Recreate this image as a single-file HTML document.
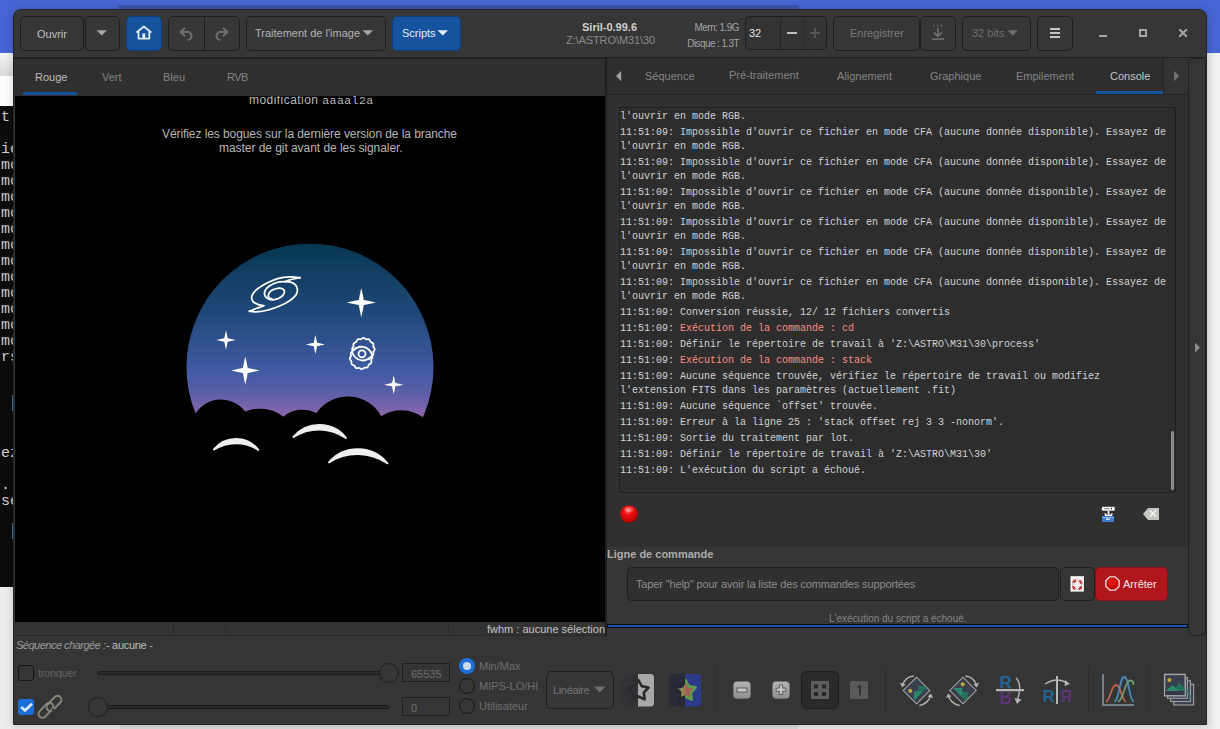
<!DOCTYPE html>
<html><head><meta charset="utf-8">
<style>
*{box-sizing:border-box;margin:0;padding:0}
html,body{width:1220px;height:729px;overflow:hidden}
body{position:relative;background:#ececec;font-family:"Liberation Sans",sans-serif;font-size:11px;color:#c8c8c8}
.a{position:absolute}
.btn{position:absolute;background:#363636;border:1px solid #1e1e1e;border-radius:5px}
.t{position:absolute;white-space:nowrap;line-height:1}
.term{position:absolute;left:1px;font-family:"Liberation Mono",monospace;font-size:15px;color:#cfcfcf;line-height:16px;white-space:pre}
.con{position:absolute;left:620px;font-family:"Liberation Mono",monospace;font-size:10px;color:#d2d2d2;white-space:pre;line-height:14px}
.red{color:#f88e86}
</style></head>
<body>
<!-- desktop background -->
<div class="a" style="left:0;top:0;width:1220px;height:53px;background:#4664d2"></div>
<div class="a" style="left:119px;top:5px;width:680px;height:5px;background:#3a54ab;border-radius:2px 2px 0 0"></div>
<div class="a" style="left:0;top:53px;width:14px;height:23px;background:linear-gradient(#f4f4f4,#d9d9d9)"></div>
<div class="a" style="left:0;top:76px;width:14px;height:30px;background:#fdfdfd"></div>
<div class="a" style="left:0;top:106px;width:14px;height:481px;background:#0c0c0c"></div>
<div class="a" style="left:1207px;top:53px;width:13px;height:676px;background:linear-gradient(90deg,#e6e6e8,#f3f4f6)"></div>
<div class="a" style="left:120px;top:724px;width:678px;height:5px;background:#dcdcdc"></div>
<!-- terminal text -->
<div class="term" style="top:110px">t
 
ie
mc
mc
mc
mc
mc
mc
mc
mc
mc
mc
mc
mc
rs</div>
<div class="a" style="left:12px;top:395px;width:1px;height:16px;background:#3a7ab8"></div>
<div class="term" style="top:446px">ez
 
.
se</div>
<div class="a" style="left:12px;top:523px;width:1px;height:16px;background:#3a7ab8"></div>

<!-- window -->
<div class="a" id="win" style="left:13px;top:9px;width:1194px;height:716px;background:#353535;border-radius:8px 8px 0 0;border:1px solid #242424;box-shadow:0 1px 8px rgba(0,0,0,0.18)"></div>

<!-- header -->
<div class="a" style="left:14px;top:10px;width:1192px;height:47px;background:#363636;border-radius:7px 7px 0 0"></div>
<div class="a" style="left:14px;top:57px;width:1192px;height:1px;background:#1f1f1f"></div>
<div class="btn" style="left:20px;top:16px;width:64px;height:35px"></div>
<div class="t" style="left:37px;top:29px;color:#c0c0c0">Ouvrir</div>
<div class="btn" style="left:85px;top:16px;width:35px;height:35px"></div>
<svg class="a" style="left:96px;top:30px" width="12" height="7"><path d="M0.5 0.3 L11 0.3 L5.75 5.6 Z" fill="#a6a6a6"/></svg>
<div class="btn" style="left:126px;top:16px;width:36px;height:35px;background:#15539e;border-color:#0f3d75"></div>
<svg class="a" style="left:134px;top:24px" width="20" height="18"><path d="M2.5 8.5 L9.9 2.5 L17.3 8.5 M4.5 7 V14.6 H15.3 V7" fill="none" stroke="#e3ebf4" stroke-width="1.8" stroke-linejoin="round"/><rect x="8.3" y="9.4" width="3" height="5" fill="#e3ebf4"/></svg>
<div class="btn" style="left:168px;top:16px;width:72px;height:35px"></div>
<div class="a" style="left:204px;top:17px;width:1px;height:33px;background:#1e1e1e"></div>
<svg class="a" style="left:176px;top:24px" width="20" height="18"><path d="M8.6 4.3 L4.5 8 L8.6 11.7 M4.8 8 H12 A4 4 0 0 1 12.6 15.8" fill="none" stroke="#6e6e6e" stroke-width="2" stroke-linecap="round" stroke-linejoin="round"/></svg>
<svg class="a" style="left:212px;top:24px" width="20" height="18"><path d="M11.4 4.3 L15.5 8 L11.4 11.7 M15.2 8 H8 A4 4 0 0 0 7.4 15.8" fill="none" stroke="#6e6e6e" stroke-width="2" stroke-linecap="round" stroke-linejoin="round"/></svg>
<div class="btn" style="left:246px;top:16px;width:140px;height:35px"></div>
<div class="t" style="left:255px;top:28px;color:#b4b4b4">Traitement de l'image</div>
<svg class="a" style="left:362px;top:30px" width="12" height="7"><path d="M0.5 0.3 L11 0.3 L5.75 5.6 Z" fill="#a6a6a6"/></svg>
<div class="btn" style="left:392px;top:16px;width:69px;height:35px;background:#15539e;border-color:#0f3d75"></div>
<div class="t" style="left:402px;top:28px;color:#e6ecf4">Scripts</div>
<svg class="a" style="left:437px;top:30px" width="12" height="7"><path d="M0.5 0.3 L11 0.3 L5.75 5.6 Z" fill="#e6ecf4"/></svg>
<div class="t" style="left:582px;top:22px;font-weight:bold;color:#cfcfcf">Siril-0.99.6</div>
<div class="t" style="left:566px;top:35px;color:#8c8c8c;letter-spacing:-0.1px">Z:\ASTRO\M31\30</div>
<div class="t" style="right:481px;top:23px;font-size:10px;color:#a4a4a4;letter-spacing:-0.55px">Mem: 1.9G</div>
<div class="t" style="right:481px;top:39px;font-size:10px;color:#a4a4a4;letter-spacing:-0.6px">Disque : 1.3T</div>
<div class="btn" style="left:745px;top:16px;width:82px;height:34px;background:#333"></div>
<div class="a" style="left:780px;top:17px;width:1px;height:32px;background:#262626"></div>
<div class="a" style="left:803px;top:17px;width:1px;height:32px;background:#2c2c2c"></div>
<div class="t" style="left:749px;top:28px;color:#e6e6e6">32</div>
<div class="a" style="left:787px;top:32px;width:10px;height:2px;background:#bdbdbd"></div>
<div class="a" style="left:810px;top:32px;width:10px;height:2px;background:#555"></div>
<div class="a" style="left:814px;top:28px;width:2px;height:10px;background:#555"></div>
<div class="btn" style="left:833px;top:16px;width:87px;height:35px"></div>
<div class="t" style="left:850px;top:28px;color:#7a7a7a">Enregistrer</div>
<div class="btn" style="left:920px;top:16px;width:36px;height:35px"></div>
<svg class="a" style="left:930px;top:23px" width="16" height="18"><g fill="#6e6e6e"><rect x="3.3" y="1.9" width="1.4" height="1.4"/><rect x="7" y="1.9" width="1.4" height="1.4"/><rect x="10.7" y="1.9" width="1.4" height="1.4"/><rect x="2" y="15.3" width="12" height="1.6"/></g><path d="M7.8 5 V13 M3.8 9.3 L7.8 13.3 L11.8 9.3" fill="none" stroke="#6e6e6e" stroke-width="1.7"/></svg>
<div class="btn" style="left:962px;top:16px;width:69px;height:35px"></div>
<div class="t" style="left:972px;top:28px;color:#6e6e6e">32 bits</div>
<svg class="a" style="left:1007px;top:30px" width="12" height="7"><path d="M0.5 0.3 L11 0.3 L5.75 5.6 Z" fill="#6e6e6e"/></svg>
<div class="btn" style="left:1037px;top:16px;width:36px;height:35px"></div>
<div class="a" style="left:1050px;top:28px;width:10px;height:2px;background:#c4c4c4"></div>
<div class="a" style="left:1050px;top:32px;width:10px;height:2px;background:#c4c4c4"></div>
<div class="a" style="left:1050px;top:36px;width:10px;height:2px;background:#c4c4c4"></div>
<div class="a" style="left:1099px;top:35px;width:8px;height:2px;background:#a6a6a6"></div>
<div class="a" style="left:1139px;top:29px;width:8px;height:8px;border:2px solid #a6a6a6"></div>
<svg class="a" style="left:1178px;top:28px" width="10" height="10"><path d="M1.2 1.2 L8.8 8.8 M8.8 1.2 L1.2 8.8" stroke="#a6a6a6" stroke-width="2"/></svg>

<!-- left pane -->
<div class="a" style="left:14px;top:58px;width:591px;height:1px;background:#212121"></div>
<div class="a" style="left:14px;top:59px;width:591px;height:37px;background:#2f2f2f"></div>
<div class="a" style="left:23px;top:92px;width:54px;height:3px;background:#15539e"></div>
<div class="t" style="left:35px;top:72px;color:#bdbdbd">Rouge</div>
<div class="t" style="left:102px;top:72px;color:#848484">Vert</div>
<div class="t" style="left:163px;top:72px;color:#848484">Bleu</div>
<div class="t" style="left:227px;top:72px;letter-spacing:-0.5px;color:#848484">RVB</div>
<div class="a" id="img" style="left:15px;top:96px;width:590px;height:526px;background:#000;overflow:hidden"></div>
<div class="a" style="left:14px;top:622px;width:591px;height:13px;background:#333"></div>
<div class="a" style="left:173px;top:622px;width:1px;height:13px;background:#2a2a2a"></div>
<div class="a" style="left:448px;top:622px;width:1px;height:13px;background:#2a2a2a"></div>
<div class="a" style="left:225px;top:622px;width:1px;height:13px;background:#2a2a2a"></div>
<div class="a" style="left:14px;top:635px;width:591px;height:1px;background:#282828"></div>
<div class="t" style="left:487px;top:624px;color:#c4c4c4">fwhm : aucune sélection</div>
<!-- pane separator -->
<div class="a" style="left:605px;top:57px;width:2px;height:579px;background:#1f1f1f"></div>
<!-- right pane -->
<div class="a" style="left:607px;top:58px;width:581px;height:36px;background:#2e2e2e"></div>
<div class="a" style="left:1163px;top:58px;width:25px;height:36px;background:#333;border-left:1px solid #232323"></div>
<div class="a" style="left:607px;top:94px;width:581px;height:1px;background:#222"></div>
<svg class="a" style="left:615px;top:70px" width="8" height="12"><path d="M6.2 1 V11.2 L1 6.1 Z" fill="#a0a0a0"/></svg>
<svg class="a" style="left:1173px;top:70px" width="8" height="12"><path d="M1 1 V11.2 L6.2 6.1 Z" fill="#707070"/></svg>
<div class="t" style="left:645px;top:71px;color:#848484">Séquence</div>
<div class="t" style="left:729px;top:70px;color:#848484">Pré-traitement</div>
<div class="t" style="left:837px;top:71px;color:#848484">Alignement</div>
<div class="t" style="left:930px;top:71px;color:#848484">Graphique</div>
<div class="t" style="left:1016px;top:71px;color:#848484">Empilement</div>
<div class="t" style="left:1110px;top:71px;color:#c4c4c4">Console</div>
<div class="a" style="left:1096px;top:91px;width:67px;height:3px;background:#15539e"></div>
<div class="a" style="left:607px;top:95px;width:581px;height:452px;background:#303030"></div>
<div class="a" style="left:619px;top:107px;width:557px;height:386px;background:#2d2d2d;border:1px solid #202020;overflow:hidden" id="console"></div>
<div class="a" style="left:1171px;top:431px;width:3px;height:59px;background:#8a8a8a;border-radius:2px"></div>
<div class="a" style="left:607px;top:547px;width:581px;height:88px;background:#363636"></div>
<div class="a" style="left:1188px;top:58px;width:18px;height:578px;background:#353535;border:1px solid #212121;border-radius:5px"></div>
<svg class="a" style="left:1194px;top:342px" width="7" height="11"><path d="M1 0.5 V10.5 L6 5.5 Z" fill="#8c8c8c"/></svg>
<div class="a" style="left:607px;top:624px;width:581px;height:4px;background:#1b5aa8;border:1px solid #0b0b0b"></div>

<!-- console text -->
<div class="con" style="top:110px">l'ouvrir en mode RGB.</div>
<div class="con" style="top:126px">11:51:09: Impossible d'ouvrir ce fichier en mode CFA (aucune donnée disponible). Essayez de</div>
<div class="con" style="top:140px">l'ouvrir en mode RGB.</div>
<div class="con" style="top:156px">11:51:09: Impossible d'ouvrir ce fichier en mode CFA (aucune donnée disponible). Essayez de</div>
<div class="con" style="top:170px">l'ouvrir en mode RGB.</div>
<div class="con" style="top:186px">11:51:09: Impossible d'ouvrir ce fichier en mode CFA (aucune donnée disponible). Essayez de</div>
<div class="con" style="top:200px">l'ouvrir en mode RGB.</div>
<div class="con" style="top:216px">11:51:09: Impossible d'ouvrir ce fichier en mode CFA (aucune donnée disponible). Essayez de</div>
<div class="con" style="top:230px">l'ouvrir en mode RGB.</div>
<div class="con" style="top:246px">11:51:09: Impossible d'ouvrir ce fichier en mode CFA (aucune donnée disponible). Essayez de</div>
<div class="con" style="top:260px">l'ouvrir en mode RGB.</div>
<div class="con" style="top:276px">11:51:09: Impossible d'ouvrir ce fichier en mode CFA (aucune donnée disponible). Essayez de</div>
<div class="con" style="top:290px">l'ouvrir en mode RGB.</div>
<div class="con" style="top:306px">11:51:09: Conversion réussie, 12/ 12 fichiers convertis</div>
<div class="con" style="top:322px">11:51:09: <span class=red>Exécution de la commande : cd</span></div>
<div class="con" style="top:338px">11:51:09: Définir le répertoire de travail à 'Z:\ASTRO\M31\30\process'</div>
<div class="con" style="top:354px">11:51:09: <span class=red>Exécution de la commande : stack</span></div>
<div class="con" style="top:370px">11:51:09: Aucune séquence trouvée, vérifiez le répertoire de travail ou modifiez</div>
<div class="con" style="top:384px">l'extension FITS dans les paramètres (actuellement .fit)</div>
<div class="con" style="top:400px">11:51:09: Aucune séquence `offset' trouvée.</div>
<div class="con" style="top:416px">11:51:09: Erreur à la ligne 25 : 'stack offset rej 3 3 -nonorm'.</div>
<div class="con" style="top:432px">11:51:09: Sortie du traitement par lot.</div>
<div class="con" style="top:448px">11:51:09: Définir le répertoire de travail à 'Z:\ASTRO\M31\30'</div>
<div class="con" style="top:464px">11:51:09: L'exécution du script a échoué.</div>

<!-- splash -->
<div class="t" style="left:249px;top:94px;font-size:12px;color:#bababa;letter-spacing:0.45px;clip-path:inset(2px 0 0 0)">modification <span style="font-family:'Liberation Mono';font-size:11.5px">aaaal2a</span></div>
<div class="t" style="left:162px;top:128px;font-size:12px;color:#b6b6b6;letter-spacing:-0.08px">Vérifiez les bogues sur la dernière version de la branche</div>
<div class="t" style="left:219px;top:142px;font-size:12px;color:#b6b6b6;letter-spacing:-0.05px">master de git avant de les signaler.</div>
<svg class="a" style="left:15px;top:96px" width="590" height="526" viewBox="15 96 590 526">
<defs>
<linearGradient id="sky" gradientUnits="userSpaceOnUse" x1="0" y1="244" x2="0" y2="420">
<stop offset="0" stop-color="#073752"/>
<stop offset="0.35" stop-color="#1c4674"/>
<stop offset="0.72" stop-color="#3f5aa2"/>
<stop offset="0.84" stop-color="#5a5ea8"/>
<stop offset="1" stop-color="#9467ab"/>
</linearGradient>
</defs>
<circle cx="310" cy="367.2" r="123.5" fill="url(#sky)"/>
<path d="M170 413 L196 413 A30 30 0 0 1 245 411.5 A39 39 0 0 1 283.4 416.7 A30 30 0 0 1 316.4 413 A38.3 38.3 0 0 1 381.4 416.2 A37 37 0 0 1 423 417.3 L450 417.3 L450 520 L170 520Z" fill="#000"/>
<path d="M214 449.5 A28.36 28.36 0 0 1 258.3 449.8 A41.81 41.81 0 0 0 214 449.5Z" fill="#efefef" stroke="#efefef" stroke-width="2" stroke-linejoin="round"/>
<path d="M293.5 437 A33.98 33.98 0 0 1 346 438 A46.58 46.58 0 0 0 293.5 437Z" fill="#efefef" stroke="#efefef" stroke-width="2" stroke-linejoin="round"/>
<path d="M329 462.3 A38.15 38.15 0 0 1 387.4 463.3 A52.85 52.85 0 0 0 329 462.3Z" fill="#efefef" stroke="#efefef" stroke-width="2" stroke-linejoin="round"/>
<path d="M361.30 288.00 Q363.05 295.30 363.78 300.12 Q368.60 300.85 375.90 302.60 Q368.60 304.35 363.78 305.08 Q363.05 309.90 361.30 317.20 Q359.55 309.90 358.82 305.08 Q354.00 304.35 346.70 302.60 Q354.00 300.85 358.82 300.12 Q359.55 295.30 361.30 288.00 Z" fill="#fff"/><path d="M226.00 330.30 Q227.16 335.15 227.65 338.35 Q230.85 338.84 235.70 340.00 Q230.85 341.16 227.65 341.65 Q227.16 344.85 226.00 349.70 Q224.84 344.85 224.35 341.65 Q221.15 341.16 216.30 340.00 Q221.15 338.84 224.35 338.35 Q224.84 335.15 226.00 330.30 Z" fill="#fff"/><path d="M315.40 334.90 Q316.55 339.70 317.03 342.87 Q320.20 343.35 325.00 344.50 Q320.20 345.65 317.03 346.13 Q316.55 349.30 315.40 354.10 Q314.25 349.30 313.77 346.13 Q310.60 345.65 305.80 344.50 Q310.60 343.35 313.77 342.87 Q314.25 339.70 315.40 334.90 Z" fill="#fff"/><path d="M245.30 356.40 Q246.99 363.45 247.70 368.10 Q252.35 368.81 259.40 370.50 Q252.35 372.19 247.70 372.90 Q246.99 377.55 245.30 384.60 Q243.61 377.55 242.90 372.90 Q238.25 372.19 231.20 370.50 Q238.25 368.81 242.90 368.10 Q243.61 363.45 245.30 356.40 Z" fill="#fff"/><path d="M393.70 375.20 Q394.84 379.95 395.31 383.08 Q398.45 383.56 403.20 384.70 Q398.45 385.84 395.31 386.31 Q394.84 389.45 393.70 394.20 Q392.56 389.45 392.08 386.31 Q388.95 385.84 384.20 384.70 Q388.95 383.56 392.08 383.08 Q392.56 379.95 393.70 375.20 Z" fill="#fff"/>
<g fill="none" stroke="#fff" stroke-width="1.75" stroke-linejoin="round" stroke-linecap="round">
<path d="M300.13 277.73 C298.82 277.58 295.10 276.88 292.28 276.83 C289.46 276.78 286.25 276.93 283.23 277.43 C280.21 277.93 277.19 278.74 274.18 279.85 C271.16 280.95 268.14 282.36 265.12 284.07 C262.11 285.78 258.28 288.09 256.07 290.11 C253.86 292.12 252.35 294.23 251.85 296.14 C251.34 298.05 251.85 300.11 253.05 301.57 C254.26 303.03 257.28 304.19 259.09 304.89 C260.90 305.59 264.42 305.19 263.92 305.80 C263.41 306.40 258.48 307.61 256.07 308.51 C253.66 309.42 250.54 310.77 249.43 311.23 "/>
<path d="M249.43 311.23 C250.54 311.33 252.95 312.03 256.07 311.83 C259.19 311.63 264.12 311.03 268.14 310.02 C272.16 309.01 276.69 307.30 280.21 305.80 C283.73 304.29 286.65 302.78 289.26 300.97 C291.88 299.16 294.54 296.84 295.90 294.93 C297.26 293.02 297.51 291.21 297.41 289.50 C297.31 287.79 296.55 285.93 295.30 284.67 C294.04 283.42 291.58 282.46 289.87 281.96 C288.16 281.45 284.64 282.11 285.04 281.66 C285.44 281.20 289.77 279.90 292.28 279.24 C294.79 278.59 298.82 277.98 300.13 277.73 "/>
<path d="M285.04 281.66 C283.83 281.76 280.21 281.66 277.80 282.26 C275.38 282.86 272.57 284.07 270.55 285.28 C268.54 286.48 266.73 287.99 265.73 289.50 C264.72 291.01 264.32 292.92 264.52 294.33 C264.72 295.74 265.63 297.05 266.93 297.95 C268.24 298.86 270.45 299.66 272.36 299.76 C274.28 299.86 276.59 299.36 278.40 298.55 C280.21 297.75 282.22 296.14 283.23 294.93 C284.23 293.73 284.54 292.32 284.43 291.31 C284.33 290.31 283.73 289.40 282.62 288.90 C281.52 288.40 279.51 288.09 277.80 288.29 C276.09 288.50 273.87 289.20 272.36 290.11 C270.86 291.01 269.35 292.52 268.74 293.73 C268.14 294.93 268.24 296.49 268.74 297.35 C269.25 298.20 271.26 298.60 271.76 298.86 "/>
<path d="M374.70,349.20 L374.62,349.69 L374.41,350.16 L374.11,350.61 L373.79,351.03 L373.52,351.44 L373.35,351.87 L373.29,352.32 L373.31,352.81 L373.38,353.33 L373.41,353.87 L373.36,354.39 L373.19,354.85 L372.87,355.24 L372.45,355.54 L371.97,355.77 L371.48,355.98 L371.04,356.20 L370.68,356.48 L370.40,356.84 L370.18,357.28 L369.97,357.77 L369.74,358.25 L369.44,358.67 L369.05,358.99 L368.59,359.16 L368.07,359.21 L367.53,359.18 L367.01,359.11 L366.52,359.09 L366.07,359.15 L365.64,359.32 L365.23,359.59 L364.81,359.91 L364.36,360.21 L363.89,360.42 L363.40,360.50 L362.91,360.42 L362.44,360.21 L361.99,359.91 L361.57,359.59 L361.16,359.32 L360.73,359.15 L360.28,359.09 L359.79,359.11 L359.27,359.18 L358.73,359.21 L358.21,359.16 L357.75,358.99 L357.36,358.67 L357.06,358.25 L356.83,357.77 L356.62,357.28 L356.40,356.84 L356.12,356.48 L355.76,356.20 L355.32,355.98 L354.83,355.77 L354.35,355.54 L353.93,355.24 L353.61,354.85 L353.44,354.39 L353.39,353.87 L353.42,353.33 L353.49,352.81 L353.51,352.32 L353.45,351.87 L353.28,351.44 L353.01,351.03 L352.69,350.61 L352.39,350.16 L352.18,349.69 L352.10,349.20 L352.18,348.71 L352.39,348.24 L352.69,347.79 L353.01,347.37 L353.28,346.96 L353.45,346.53 L353.51,346.08 L353.49,345.59 L353.42,345.07 L353.39,344.53 L353.44,344.01 L353.61,343.55 L353.93,343.16 L354.35,342.86 L354.83,342.63 L355.32,342.42 L355.76,342.20 L356.12,341.92 L356.40,341.56 L356.62,341.12 L356.83,340.63 L357.06,340.15 L357.36,339.73 L357.75,339.41 L358.21,339.24 L358.73,339.19 L359.27,339.22 L359.79,339.29 L360.28,339.31 L360.73,339.25 L361.16,339.08 L361.57,338.81 L361.99,338.49 L362.44,338.19 L362.91,337.98 L363.40,337.90 L363.89,337.98 L364.36,338.19 L364.81,338.49 L365.23,338.81 L365.64,339.08 L366.07,339.25 L366.52,339.31 L367.01,339.29 L367.53,339.22 L368.07,339.19 L368.59,339.24 L369.05,339.41 L369.44,339.73 L369.74,340.15 L369.97,340.63 L370.18,341.12 L370.40,341.56 L370.68,341.92 L371.04,342.20 L371.48,342.42 L371.97,342.63 L372.45,342.86 L372.87,343.16 L373.19,343.55 L373.36,344.01 L373.41,344.53 L373.38,345.07 L373.31,345.59 L373.29,346.08 L373.35,346.53 L373.52,346.96 L373.79,347.37 L374.11,347.79 L374.41,348.24 L374.62,348.71Z"/>
<path d="M372.25,357.90 L372.01,358.38 L371.72,358.83 L371.45,359.26 L371.26,359.69 L371.17,360.13 L371.20,360.61 L371.28,361.11 L371.38,361.64 L371.41,362.17 L371.33,362.67 L371.11,363.11 L370.75,363.47 L370.31,363.77 L369.84,364.02 L369.38,364.26 L369.00,364.53 L368.71,364.87 L368.49,365.29 L368.31,365.77 L368.13,366.28 L367.89,366.75 L367.57,367.14 L367.16,367.41 L366.67,367.55 L366.14,367.59 L365.61,367.56 L365.10,367.55 L364.63,367.59 L364.20,367.74 L363.81,368.00 L363.41,368.32 L363.00,368.67 L362.56,368.96 L362.08,369.14 L361.59,369.17 L361.10,369.05 L360.62,368.81 L360.17,368.52 L359.74,368.25 L359.31,368.06 L358.87,367.97 L358.39,368.00 L357.89,368.08 L357.36,368.18 L356.83,368.21 L356.33,368.13 L355.89,367.91 L355.53,367.55 L355.23,367.11 L354.98,366.64 L354.74,366.18 L354.47,365.80 L354.13,365.51 L353.71,365.29 L353.23,365.11 L352.72,364.93 L352.25,364.69 L351.86,364.37 L351.59,363.96 L351.45,363.47 L351.41,362.94 L351.44,362.41 L351.45,361.90 L351.41,361.43 L351.26,361.00 L351.00,360.61 L350.68,360.21 L350.33,359.80 L350.04,359.36 L349.86,358.88 L349.83,358.39 L349.95,357.90 L350.19,357.42 L350.48,356.97 L350.75,356.54 L350.94,356.11 L351.03,355.67 L351.00,355.19 L350.92,354.69 L350.82,354.16 L350.79,353.63 L350.87,353.13 L351.09,352.69 L351.45,352.33 L351.89,352.03 L352.36,351.78 L352.82,351.54 L353.20,351.27 L353.49,350.93 L353.71,350.51 L353.89,350.03 L354.07,349.52 L354.31,349.05 L354.63,348.66 L355.04,348.39 L355.53,348.25 L356.06,348.21 L356.59,348.24 L357.10,348.25 L357.57,348.21 L358.00,348.06 L358.39,347.80 L358.79,347.48 L359.20,347.13 L359.64,346.84 L360.12,346.66 L360.61,346.63 L361.10,346.75 L361.58,346.99 L362.03,347.28 L362.46,347.55 L362.89,347.74 L363.33,347.83 L363.81,347.80 L364.31,347.72 L364.84,347.62 L365.37,347.59 L365.87,347.67 L366.31,347.89 L366.67,348.25 L366.97,348.69 L367.22,349.16 L367.46,349.62 L367.73,350.00 L368.07,350.29 L368.49,350.51 L368.97,350.69 L369.48,350.87 L369.95,351.11 L370.34,351.43 L370.61,351.84 L370.75,352.33 L370.79,352.86 L370.76,353.39 L370.75,353.90 L370.79,354.37 L370.94,354.80 L371.20,355.19 L371.52,355.59 L371.87,356.00 L372.16,356.44 L372.34,356.92 L372.37,357.41Z"/>
<path d="M351.86 351.79 C358.74 343.87 368.59 345.60 372.34 355.41 C365.46 363.33 355.61 361.60 351.86 351.79Z" fill="url(#sky)"/>
<circle cx="362" cy="353.8" r="3.5"/>
</g>
</svg>

<!-- console lower -->
<svg class="a" style="left:618px;top:503px" width="22" height="22"><defs><radialGradient id="rb" cx="0.45" cy="0.3" r="0.7"><stop offset="0" stop-color="#ff8080"/><stop offset="0.35" stop-color="#f01010"/><stop offset="1" stop-color="#b00000"/></radialGradient></defs><circle cx="11" cy="11" r="8.8" fill="url(#rb)"/><ellipse cx="11" cy="6.5" rx="4.5" ry="2.5" fill="#fff" opacity="0.22"/></svg>
<svg class="a" style="left:1100px;top:505px" width="18" height="19">
<rect x="1.8" y="1.8" width="13" height="4" rx="1.2" fill="#f4f4f4"/><rect x="3.5" y="3.2" width="6" height="1" fill="#888"/><rect x="11" y="2.6" width="0.8" height="2" fill="#222"/>
<path d="M8.5 5.8 V10.5 M5.2 8.5 Q5.2 11.2 8.5 11.2 Q11.8 11.2 11.8 8.5" fill="none" stroke="#f4f4f4" stroke-width="1.8"/>
<rect x="2" y="11" width="12" height="6" fill="#3f7ad0"/><rect x="2" y="12" width="12" height="0.7" fill="#a8c4ec"/><rect x="6" y="13.5" width="4" height="1.3" fill="#e8eef8"/>
</svg>
<svg class="a" style="left:1142px;top:507px" width="18" height="14"><path d="M1 7 L6 1 H17 V13 H6 Z" fill="#c2c4be"/><path d="M7.8 3.4 L14.2 9.8 M14.2 3.4 L7.8 9.8" stroke="#f2f2f2" stroke-width="1.5"/></svg>
<div class="t" style="left:607px;top:549px;font-weight:bold;color:#acacac">Ligne de commande</div>
<div class="a" style="left:627px;top:567px;width:432px;height:34px;background:#303030;border:1px solid #1f1f1f;border-radius:5px"></div>
<div class="t" style="left:636px;top:579px;color:#8c8c8c;letter-spacing:-0.13px">Taper "help" pour avoir la liste des commandes supportées</div>
<div class="btn" style="left:1060px;top:567px;width:35px;height:34px;border-radius:5px;background:#353535"></div>
<svg class="a" style="left:1070px;top:576px" width="15" height="16"><rect x="0.5" y="0.2" width="13.4" height="15.4" fill="#fafafa"/><rect x="2" y="1.8" width="10.4" height="12.4" fill="#e8e8e8"/><circle cx="7.2" cy="8.8" r="4.6" fill="none" stroke="#d01818" stroke-width="2.2" stroke-dasharray="3.6 3.6" stroke-dashoffset="-1.8"/><circle cx="7.2" cy="8.8" r="4.6" fill="none" stroke="#9a9a9a" stroke-width="0.5"/><circle cx="7.2" cy="8.8" r="1.6" fill="#fff"/></svg>
<div class="a" style="left:1095px;top:567px;width:73px;height:34px;background:#b2161d;border:1px solid #8a0f14;border-radius:5px"></div>
<svg class="a" style="left:1104px;top:575px" width="17" height="17"><polygon points="15.80,11.52 11.52,15.80 5.48,15.80 1.20,11.52 1.20,5.48 5.48,1.20 11.52,1.20 15.80,5.48" fill="#dde3de"/><polygon points="14.41,10.95 10.95,14.41 6.05,14.41 2.59,10.95 2.59,6.05 6.05,2.59 10.95,2.59 14.41,6.05" fill="#c80000"/><circle cx="8" cy="7" r="4" fill="#ee2020" opacity="0.6"/></svg>
<div class="t" style="left:1123px;top:579px;color:#f0e6e6">Arrêter</div>
<div class="t" style="left:829px;top:614px;font-size:10px;color:#848484">L'exécution du script a échoué.</div>

<!-- bottom toolbar -->
<div class="t" style="left:16px;top:640px;color:#9a9a9a;font-style:italic;letter-spacing:-0.5px">Séquence chargée :</div><div class="t" style="left:106px;top:640px;color:#bcbcbc;letter-spacing:-0.3px">- aucune -</div>
<div class="a" style="left:18px;top:665px;width:16px;height:16px;border:1px solid #151515;border-radius:3px;background:#353535"></div>
<div class="t" style="left:38px;top:668px;color:#606060;letter-spacing:-0.3px">tronquer</div>
<div class="a" style="left:97px;top:671px;width:292px;height:4px;background:#2a2a2a;border:1px solid #1c1c1c;border-radius:2px"></div>
<div class="a" style="left:379px;top:663px;width:20px;height:20px;border:1px solid #1e1e1e;border-radius:50%;background:#363636"></div>
<div class="a" style="left:402px;top:663px;width:48px;height:19px;border:1px solid #1f1f1f;background:#353535"></div>
<div class="t" style="left:411px;top:669px;color:#6e6e6e">65535</div>
<div class="a" style="left:18px;top:699px;width:16px;height:16px;border-radius:3px;background:#1b6ed6"></div>
<svg class="a" style="left:18px;top:699px" width="16" height="16"><path d="M3.2 8 L7 11.4 L14 4.8" fill="none" stroke="#dce8f8" stroke-width="2.6"/></svg>
<svg class="a" style="left:36px;top:693px" width="28" height="28"><g fill="none" stroke-width="2" stroke="#85857b">
<path d="M17.23 16.88 L24.43 9.28 A3.9 3.9 0 0 0 18.77 3.92 L11.57 11.52 A3.9 3.9 0 0 0 17.23 16.88Z"/>
<path d="M9.6 10.6 L11.8 8.6" stroke="#353535" stroke-width="2.6"/>
<path d="M9.23 23.68 L16.23 16.28 A3.9 3.9 0 0 0 10.57 10.92 L3.57 18.32 A3.9 3.9 0 0 0 9.23 23.68Z"/>
<path d="M18.2 16.2 L16.2 18.2" stroke="#353535" stroke-width="2.6"/>
</g></svg>
<div class="a" style="left:107px;top:705px;width:282px;height:4px;background:#2a2a2a;border:1px solid #1c1c1c;border-radius:2px"></div>
<div class="a" style="left:88px;top:697px;width:20px;height:20px;border:1px solid #1e1e1e;border-radius:50%;background:#363636"></div>
<div class="a" style="left:402px;top:697px;width:48px;height:19px;border:1px solid #1f1f1f;background:#353535"></div>
<div class="t" style="left:411px;top:703px;color:#6e6e6e">0</div>
<div class="a" style="left:459px;top:658px;width:16px;height:16px;border-radius:50%;background:#1e6fd9"></div>
<div class="a" style="left:463px;top:662px;width:8px;height:8px;border-radius:50%;background:#c8d9f2"></div>
<div class="a" style="left:459px;top:678px;width:16px;height:16px;border-radius:50%;border:1px solid #151515"></div>
<div class="a" style="left:459px;top:698px;width:16px;height:16px;border-radius:50%;border:1px solid #151515"></div>
<div class="t" style="left:479px;top:661px;color:#6e6e6e">Min/Max</div>
<div class="t" style="left:479px;top:681px;color:#6e6e6e">MIPS-LO/HI</div>
<div class="t" style="left:479px;top:701px;color:#6e6e6e">Utilisateur</div>
<div class="btn" style="left:546px;top:671px;width:68px;height:38px"></div>
<div class="t" style="left:553px;top:685px;color:#747474;letter-spacing:-0.35px">Linéaire</div>
<svg class="a" style="left:594px;top:686px" width="12" height="7"><path d="M0 0.5 L11.5 0.5 L5.75 6.5 Z" fill="#6e6e6e"/></svg>
<svg class="a" style="left:622px;top:674px" width="33" height="33"><defs><clipPath id="c1"><rect x="0.5" y="0" width="31.5" height="32.4" rx="3.5"/></clipPath></defs><g clip-path="url(#c1)"><rect x="0" y="0" width="16" height="33" fill="#303236"/><rect x="16" y="0" width="17" height="33" fill="#a8a8a8"/></g><polygon points="16.40,6.20 19.75,12.19 26.48,13.52 21.82,18.56 22.63,25.38 16.40,22.50 10.17,25.38 10.98,18.56 6.32,13.52 13.05,12.19" fill="none" stroke="#2b2b2b" stroke-width="2.7" stroke-linejoin="round"/></svg>
<svg class="a" style="left:669px;top:674px" width="33" height="33"><defs><clipPath id="c2"><rect x="0.5" y="0" width="31.5" height="32.4" rx="3.5"/></clipPath><clipPath id="c2l"><rect x="0" y="0" width="16" height="33"/></clipPath><clipPath id="c2r"><rect x="16" y="0" width="17" height="33"/></clipPath></defs><g clip-path="url(#c2)"><rect x="0" y="0" width="16" height="33" fill="#262b36"/><rect x="16" y="0" width="17" height="33" fill="#2d3a8c"/></g><g clip-path="url(#c2l)"><polygon points="16.40,6.20 19.75,12.19 26.48,13.52 21.82,18.56 22.63,25.38 16.40,22.50 10.17,25.38 10.98,18.56 6.32,13.52 13.05,12.19" fill="#8c8850" stroke="#23262e" stroke-width="3" stroke-linejoin="round"/></g><g clip-path="url(#c2r)"><polygon points="16.40,6.20 19.75,12.19 26.48,13.52 21.82,18.56 22.63,25.38 16.40,22.50 10.17,25.38 10.98,18.56 6.32,13.52 13.05,12.19" fill="#ad5a5c" stroke="#5c9a4a" stroke-width="3" stroke-linejoin="round"/></g></svg>
<div class="a" style="left:715px;top:668px;width:1px;height:44px;background:#2c2c2c"></div>
<svg class="a" style="left:733px;top:681px" width="18" height="18"><defs><linearGradient id="zg" x1="0" y1="0" x2="0" y2="1"><stop offset="0" stop-color="#b4b4b4"/><stop offset="1" stop-color="#8e8e8e"/></linearGradient></defs><rect x="0.5" y="0.5" width="17" height="17" rx="3.5" fill="url(#zg)" stroke="#777" stroke-width="0.6"/><rect x="4" y="7" width="10" height="4" fill="#c8c8c8" stroke="#5a5a5a" stroke-width="1"/></svg>
<svg class="a" style="left:772px;top:681px" width="18" height="18"><rect x="0.5" y="0.5" width="17" height="17" rx="3.5" fill="url(#zg)" stroke="#777" stroke-width="0.6"/><path d="M7.4 3.9 H10.6 V7.1 H13.8 V10.3 H10.6 V13.5 H7.4 V10.3 H4.2 V7.1 H7.4Z" fill="#c4c4c4" stroke="#5a5a5a" stroke-width="0.9"/></svg>
<div class="a" style="left:801px;top:671px;width:38px;height:38px;background:#2a2a2a;border:1px solid #1e1e1e;border-radius:6px"></div>
<svg class="a" style="left:811px;top:681px" width="18" height="18"><rect x="0" y="0" width="18" height="18" rx="1" fill="#5e5e5e"/><g fill="#262626"><rect x="3" y="3.4" width="4.2" height="4"/><rect x="10.9" y="3.4" width="4.2" height="4"/><rect x="3" y="11" width="4.2" height="4"/><rect x="10.9" y="11" width="4.2" height="4"/></g><circle cx="9" cy="9.2" r="3.2" fill="#5e5e5e"/></svg>
<svg class="a" style="left:850px;top:681px" width="18" height="18"><rect x="0" y="0" width="18" height="18" rx="1.5" fill="#5a5a5a"/><path d="M7.2 5.4 L10 3.6 H11 V14.4 H9 V6.4 L7.6 7.2Z" fill="#333"/></svg>
<div class="a" style="left:885px;top:668px;width:1px;height:43px;background:#2c2c2c"></div>
<svg class="a" style="left:898px;top:673px" width="36" height="35">
<g transform="translate(18.5 17.5) rotate(-45)"><rect x="-9.4" y="-9.4" width="18.8" height="18.8" fill="#3a3f4e" stroke="#a6a6a6" stroke-width="1"/>
<path d="M-8.9 5.2 L-2.5 -1.2 L0.8 1.6 L4.2 -2.2 L8.9 2.4 V5.2Z" fill="#2a8a6a"/><path d="M0.8 1.6 L4.2 -2.2 L8.9 2.4 V5.2 H3Z" fill="#23705a"/>
<circle cx="-4.6" cy="-4.2" r="2" fill="#c4a83a"/></g>
<path d="M15.8 2.9 A13 13 0 0 0 4.4 12.6" fill="none" stroke="#b4b4b4" stroke-width="1.5"/><path d="M2 9.8 L4.2 14.4 L7.6 11.2Z" fill="#b4b4b4"/>
<path d="M21.3 32.4 A13 13 0 0 0 32.6 22.3" fill="none" stroke="#b4b4b4" stroke-width="1.5"/><path d="M35 25 L33 20.4 L29.5 23.5Z" fill="#b4b4b4"/>
</svg>
<svg class="a" style="left:945px;top:673px" width="36" height="35">
<g transform="translate(18 17.5) rotate(45)"><rect x="-9.4" y="-9.4" width="18.8" height="18.8" fill="#3a3f4e" stroke="#a6a6a6" stroke-width="1"/>
<path d="M-8.9 5.2 L-2.5 -1.2 L0.8 1.6 L4.2 -2.2 L8.9 2.4 V5.2Z" fill="#2a8a6a"/><path d="M0.8 1.6 L4.2 -2.2 L8.9 2.4 V5.2 H3Z" fill="#23705a"/>
<circle cx="-4.6" cy="-4.2" r="2" fill="#c4a83a"/></g>
<g transform="translate(36 0) scale(-1 1)"><path d="M15.8 2.9 A13 13 0 0 0 4.4 12.6" fill="none" stroke="#b4b4b4" stroke-width="1.5"/><path d="M2 9.8 L4.2 14.4 L7.6 11.2Z" fill="#b4b4b4"/>
<path d="M21.3 32.4 A13 13 0 0 0 32.6 22.3" fill="none" stroke="#b4b4b4" stroke-width="1.5"/><path d="M35 25 L33 20.4 L29.5 23.5Z" fill="#b4b4b4"/></g>
</svg>
<svg class="a" style="left:994px;top:672px" width="34" height="36">
<text x="5.5" y="16" font-family="Liberation Sans" font-weight="bold" font-size="17" fill="#25628f">R</text>
<text x="5.5" y="-19.5" font-family="Liberation Sans" font-weight="bold" font-size="17" fill="#5e3474" transform="scale(1 -1)">R</text>
<rect x="2" y="17" width="28" height="2.2" fill="#b8b8b8"/>
<path d="M22 6 Q28.5 12 23.5 28" fill="none" stroke="#b4b4b4" stroke-width="1.4"/><path d="M20.5 26 L23 32 L27.5 27.5Z" fill="#b4b4b4"/>
</svg>
<svg class="a" style="left:1040px;top:672px" width="34" height="36">
<rect x="16" y="4" width="2" height="28" fill="#b8b8b8"/>
<text x="2.5" y="30" font-family="Liberation Sans" font-weight="bold" font-size="17" fill="#25628f">R</text>
<text x="-32" y="30" font-family="Liberation Sans" font-weight="bold" font-size="17" fill="#5e3474" transform="scale(-1 1)">R</text>
<path d="M5 12 Q17 4.5 27 11" fill="none" stroke="#b4b4b4" stroke-width="1.4"/><path d="M25 8 L30 12 L24.5 14Z" fill="#b4b4b4"/>
</svg>
<div class="a" style="left:1088px;top:668px;width:1px;height:43px;background:#2c2c2c"></div>
<svg class="a" style="left:1100px;top:672px" width="36" height="36">
<path d="M3 2 V33 H34" fill="none" stroke="#6e828a" stroke-width="2"/>
<path d="M6 29.5 C10 29.5 11 13 16 13 C21 13 22 29.5 26 29.5" fill="none" stroke="#c0634a" stroke-width="1.8"/>
<path d="M14.4 29.5 C19 29.5 19.5 5 24.3 5 C29 5 29.5 29.5 33.7 29.5" fill="none" stroke="#4a8ab8" stroke-width="1.8"/>
<path d="M18 29.5 C23 29.5 25 8.5 30 8.5 C33 8.5 33.5 11 33.5 13" fill="none" stroke="#6a9a70" stroke-width="1.8"/>
</svg>
<div class="a" style="left:1148px;top:668px;width:1px;height:43px;background:#2c2c2c"></div>
<svg class="a" style="left:1162px;top:672px" width="34" height="36">
<rect x="11.8" y="12.3" width="19.8" height="20.7" fill="#3a4050" stroke="#9a9a9a" stroke-width="1.2"/>
<rect x="8.6" y="8.8" width="19.8" height="20.7" fill="#3a4050" stroke="#9a9a9a" stroke-width="1.2"/>
<rect x="5.6" y="5.6" width="19.8" height="20.7" fill="#3a4050" stroke="#9a9a9a" stroke-width="1.2"/>
<path d="M30.9 28 L22 19 L25 17 Z" fill="#2a7a5e" opacity="0.7"/>
<rect x="2.6" y="2.4" width="20.6" height="21.4" fill="#3a4050" stroke="#a8a8a8" stroke-width="1.4"/>
<path d="M3.5 19 L10.5 13 L14 16 L17 11 L22.5 16.5 V19 Z" fill="#2a8a6a"/><path d="M14 16 L17 11 L22.5 16.5 V19 H17Z" fill="#256f57"/>
<rect x="3.4" y="19" width="19" height="4" fill="#343846"/>
<circle cx="7.4" cy="7.9" r="2" fill="#c4a83a"/>
</svg>
</body></html>
